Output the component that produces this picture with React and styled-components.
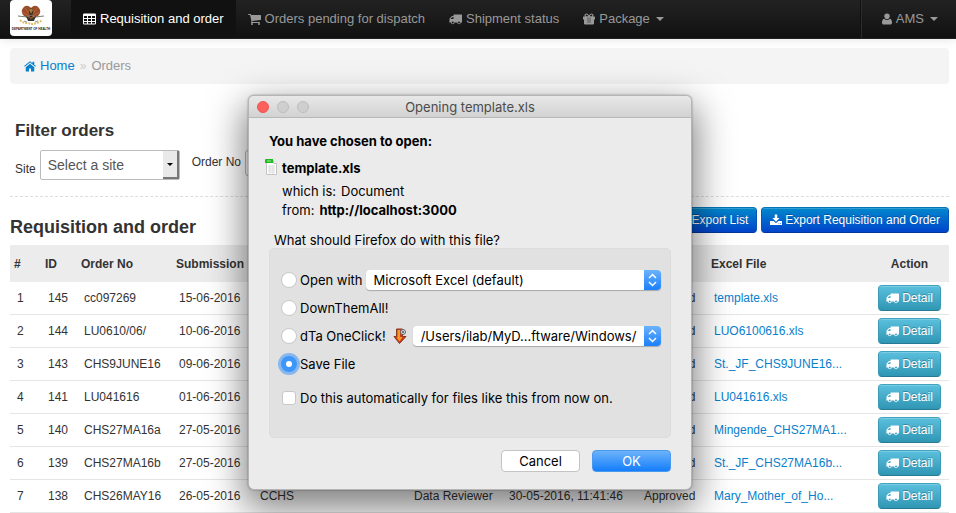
import React from "react";
import styled, { createGlobalStyle, css } from "styled-components";

const GlobalStyle = createGlobalStyle`
  *, *::before, *::after { box-sizing: border-box; }
  html, body { margin: 0; overflow: hidden; }
  body {
    background: #fff;
    color: #333;
    font-family: "Liberation Sans", Arial, sans-serif;
    font-size: 12px;
    line-height: 16px;
  }
  a { color: #0880cc; text-decoration: none; }
  button, select, input { font: inherit; margin: 0; }
`;

/* ---------- icons ---------- */

const Glyph = styled.svg`
  display: block;
  flex: none;
  fill: currentColor;
`;

const TableIcon = () => (
  <Glyph width="13" height="12" viewBox="0 0 13 12" aria-hidden="true">
    <path
      fillRule="evenodd"
      d="M1.2 0.5h10.6a1.2 1.2 0 0 1 1.2 1.2v8.6a1.2 1.2 0 0 1-1.2 1.2H1.2A1.2 1.2 0 0 1 0 10.300V1.700A1.200 1.200 0 0 1 1.200.5zM1 3v2h3V3zm4 0v2h3V3zm4 0v2h3V3zM1 6v2h3V6zm4 0v2h3V6zm4 0v2h3V6zM1 9v1.500h3V9zm4 0v1.500h3V9zm4 0v1.500h3V9z"
    />
  </Glyph>
);

const CartIcon = () => (
  <Glyph width="13" height="12" viewBox="0 0 1664 1536" aria-hidden="true">
    <path d="M640 1408a128 128 0 1 1-256 0 128 128 0 0 1 256 0zm896 0a128 128 0 1 1-256 0 128 128 0 0 1 256 0zm128-1088v512q0 24-16 42.500t-41 21.500L563 1018q13 60 13 70 0 16-24 64h920q26 0 45 19t19 45-19 45-45 19H448q-26 0-45-19t-19-45q0-11 8-31.500t16-36 21.500-40T445 1079L268 256H64q-26 0-45-19T0 192t19-45 45-19h256q16 0 28.500 6.500T368 150t13 24.500 8 26 5.500 29.500 4.500 26h1201q26 0 45 19t19 45z" />
  </Glyph>
);

const TruckIcon = () => (
  <Glyph width="13" height="12" viewBox="0 0 26 24" aria-hidden="true">
    <path
      fillRule="evenodd"
      d="M10 3h15a1 1 0 0 1 1 1v14a1 1 0 0 1-1 1h-1.500a3.500 3.500 0 0 1-7 0H11a3.500 3.500 0 0 1-7 0H1.500a1 1 0 0 1-.9-1.400L1 16.500V12q0-.8.6-1.400l3.800-3.900q.6-.7 1.400-.7H9V4a1 1 0 0 1 1-1zM3 12h6V8H7zm4.500 5a2 2 0 1 0 0 4 2 2 0 0 0 0-4zM20 17a2 2 0 1 0 0 4 2 2 0 0 0 0-4z"
    />
  </Glyph>
);

const GiftIcon = () => (
  <Glyph width="12" height="12" viewBox="0 0 24 24" aria-hidden="true">
    <path
      fillRule="evenodd"
      d="M7 1c2 0 3.600 1.600 5 4 1.400-2.400 3-4 5-4 2.200 0 4 1.700 4 3.800 0 .8-.2 1.600-.7 2.200H23a1 1 0 0 1 1 1v5h-2v8a2 2 0 0 1-2 2H4a2 2 0 0 1-2-2v-8H0V8a1 1 0 0 1 1-1h2.700A4 4 0 0 1 3 4.800C3 2.700 4.800 1 7 1zm0 2.200a1.700 1.700 0 1 0 0 3.400h3.600C9.500 4.500 8.400 3.200 7 3.200zm10 0c-1.400 0-2.500 1.300-3.600 3.400H17a1.700 1.700 0 1 0 0-3.400zM9.500 9v11h1V9zm4 0v11h1V9z"
    />
  </Glyph>
);

const UserIcon = () => (
  <Glyph width="10" height="12" viewBox="0 0 20 24" aria-hidden="true">
    <path d="M10 1a5.500 5.500 0 0 1 5.500 5.500c0 3-2.500 6-5.500 6s-5.500-3-5.500-6A5.500 5.500 0 0 1 10 1zM4.500 11.500C6 13 8 14 10 14s4-1 5.500-2.500c3 0 4.500 3.500 4.500 8 0 2.300-1.400 3.500-3.500 3.500h-13C1.400 23 0 21.800 0 19.500c0-4.500 1.500-8 4.500-8z" />
  </Glyph>
);

const HomeIcon = () => (
  <Glyph width="12" height="11" viewBox="0 0 24 22" aria-hidden="true">
    <path d="M12 5.500l8.500 7V20a1.200 1.200 0 0 1-1.200 1.200H14V15h-4v6.200H4.700A1.200 1.200 0 0 1 3.500 20v-7.500zM10.700 1.300a2 2 0 0 1 2.600 0L17 4.400V1.700h3.500v5.600l3.300 2.800-1.300 1.500L12 3.200 1.500 11.600.2 10.100z" />
  </Glyph>
);

const DownloadIcon = () => (
  <Glyph width="12" height="12" viewBox="0 0 24 24" aria-hidden="true">
    <path
      fillRule="evenodd"
      d="M9.500 1h5v7h4.700L12 15.300 4.800 8h4.700zM1 14h6.300l3 3q1.700 1.500 3.400 0l3-3H23a1 1 0 0 1 1 1v6a1 1 0 0 1-1 1H1a1 1 0 0 1-1-1v-6a1 1 0 0 1 1-1zm16 4.500v1.500h1.500v-1.500zm3.500 0V20H22v-1.500z"
    />
  </Glyph>
);

const CrestIcon = () => (
  <svg width="28" height="22" viewBox="0 0 28 22" aria-hidden="true">
    <path d="M6 3Q9-1 13 2l1 1 1-1q4-3 7 1 3 4-1 8l-5 3h-4L7 11Q3 7 6 3z" fill="#9b4d2a" />
    <path d="M8 3l5 7M20 3l-5 7M5 7l7 4M23 7l-7 4" stroke="#b3633a" strokeWidth="1" />
    <path d="M13 3h2l1 4-1 5h-2l-1-5z" fill="#33231b" />
    <path d="M12 5l2-2 2 2-2 4z" fill="#a07c3a" />
    <path d="M1 11l9 1 4-2 4 2 9-1" fill="none" stroke="#778075" strokeWidth="1" />
    <path d="M9 11l5 3 5-3-2 5h-6z" fill="#34372f" />
    <path d="M3 15q3 3 6 3t5 1q3 0 6-1t5-3" fill="none" stroke="#e2bf6c" strokeWidth="2" strokeDasharray="2 1" />
    <path d="M7 16l3 1M18 17l3-1" stroke="#8a97a0" strokeWidth="1" />
  </svg>
);

const FileIcon = () => (
  <svg width="13" height="17" viewBox="0 0 13 17" aria-hidden="true">
    <path d="M1.500 1.500h7l3 3v11h-10z" fill="#fff" stroke="#c4c4c4" />
    <path d="M3 7h7M3 9h7M3 11h7M3 13h7M5 6v9M8 6v9" stroke="#ddd" />
    <path d="M8.500 1.500v3h3" fill="#eee" stroke="#c5c5c5" />
    <path d="M0 1q0-1 1-1h7v4H0z" fill="#21b921" />
    <path d="M2 2h4" stroke="#a5eaa0" />
  </svg>
);

const ArrowIcon = () => (
  <svg width="14" height="16" viewBox="0 0 14 16" aria-hidden="true">
    <path d="M3.500 1h6v7.500H13l-6.500 7L1 8.500h2.500z" fill="#c93b18" stroke="#8c3425" />
    <path d="M4.500 2h2.500v7h2.500l-3 4.500L3.500 9.500h1z" fill="#f59a22" />
    <circle cx="10" cy="4" r="2.500" fill="#ddd" stroke="#666" />
    <circle cx="10" cy="4" r="1" fill="#555" />
  </svg>
);

const Caret = styled.span`
  border: 4px solid transparent;
  border-top-color: currentColor;
  border-bottom: 0;
  margin-left: 2px;
`;

/* ---------- navigation ---------- */

const Navbar = styled.nav`
  display: flex;
  height: 39px;
  padding-left: 10px;
  background: linear-gradient(#222, #111);
  border-bottom: 1px solid #252020;
  box-shadow: 0 1px 10px rgba(0, 0, 0, 0.1);
`;

const Brand = styled.a`
  display: flex;
  flex-direction: column;
  align-items: center;
  width: 42px;
  height: 36px;
  margin-right: 19px;
  padding-top: 5px;
  border-radius: 4px;
  background: #fff;
  color: #222;
  font-size: 3px;
  font-weight: bold;
  line-height: 4px;
  white-space: nowrap;
`;

const NavItem = styled.a`
  display: flex;
  align-items: center;
  gap: 4px;
  padding: 0 12px;
  font-size: 13px;
  color: ${(p) => (p.$active ? "#fff" : "#999")};
  white-space: nowrap;
  ${(p) => p.$active && css`background: #111;`}
  ${(p) =>
    p.$account &&
    css`
      margin-left: auto;
      padding: 0 18px 0 21px;
      border-left: 1px solid #111;
      box-shadow: inset 1px 0 #2c2c2c;
    `}
`;

/* ---------- page ---------- */

const Page = styled.main`
  padding: 9px 7px 0 10px;
`;

const Breadcrumb = styled.div`
  display: flex;
  align-items: center;
  gap: 5px;
  height: 36px;
  padding: 0 14px;
  border-radius: 4px;
  background: #f4f4f4;
  color: #999;
  font-size: 13px;

  a { display: flex; align-items: center; gap: 4px; }
  i { font-style: normal; color: #ccc; font-size: 12px; }
`;

const Title = styled.h3`
  margin: 0;
  font-size: 18px;
  line-height: 24px;
`;

const Filters = styled.section`
  padding: 35px 5px 16px;
  border-bottom: 1px dashed #ddd;

  ${Title} { font-size: 17px; }
`;

const FilterRow = styled.form`
  display: flex;
  align-items: center;
  height: 30px;
  margin-top: 7px;
`;

const FilterLabel = styled.label`
  color: #333;
  margin-right: 4px;
  ${(p) => (p.$raised ? css`margin-left: 12px; padding-bottom: 7px;` : css`padding-top: 8px;`)}
`;

const SiteBox = styled.div`
  display: grid;
  grid-template-columns: 1fr 16px;
  width: 140px;
  height: 30px;
  border: 1px solid #bbb;
  border-radius: 2px;
  background: #fff;

  select {
    grid-area: 1 / 1 / 2 / 3;
    appearance: none;
    border: 0;
    padding: 0 7px;
    background: none;
    color: #555;
    font-size: 14px;
  }
`;

const SiteArrow = styled.span`
  grid-area: 1 / 2 / 2 / 3;
  display: grid;
  place-items: center;
  background: #e9e9e9;
  border-right: 2px solid #777;
  border-bottom: 2px solid #777;
  color: #000;
  pointer-events: none;

  ${Caret} { margin: 0; border-width: 3px 3px 0; }
`;

const OrderInput = styled.input`
  width: 130px;
  height: 26px;
  margin-bottom: 4px;
  border: 1px solid #bbb;
  border-radius: 3px;
`;

const ListHeader = styled.div`
  display: flex;
  align-items: center;
  justify-content: space-between;
  height: 48px;

  ${Title} { padding-top: 12px; }
`;

const Actions = styled.div`
  display: flex;
  gap: 4px;
  padding-bottom: 2px;
`;

const Button = styled.button`
  display: inline-flex;
  align-items: center;
  justify-content: center;
  gap: 3px;
  height: 26px;
  padding: 0 ${(p) => (p.$info ? "7px" : "8px")};
  border: 1px solid;
  border-radius: 4px;
  color: #fff;
  white-space: nowrap;
  text-shadow: 0 -1px 0 rgba(0, 0, 0, 0.25);
  box-shadow: inset 0 1px 0 rgba(255, 255, 255, 0.2);
  ${(p) =>
    p.$info
      ? css`
          background: linear-gradient(#5bc0de, #2f96b4);
          border-color: #3ea4bf #3a9ab5 #267a93;
        `
      : css`
          background: linear-gradient(#0088cc, #0044cc);
          border-color: #0574b5 #0656b6 #003696;
        `}
`;

const Table = styled.table`
  width: 100%;
  table-layout: fixed;
  border-collapse: separate;
  border-spacing: 0;

  th {
    height: 37px;
    padding: 0 4px;
    background: #ececec;
    text-align: left;
    white-space: nowrap;
  }
  td {
    height: 33px;
    padding: 0 0 0 7px;
    border-bottom: 1px solid #e5e5e5;
    white-space: nowrap;
  }
  th:last-child, td:last-child { padding: 0; text-align: center; }
  ${Button} { vertical-align: middle; }
`;

const Col = styled.col`
  width: ${(p) => p.$w};
`;

/* ---------- dialog ---------- */

const Dialog = styled.section`
  position: absolute;
  top: 95px;
  left: 50%;
  width: 444px;
  margin-left: -230px;
  border: 1px solid #b5b5b5;
  border-radius: 6px;
  background: #ebebeb;
  color: #000;
  font-family: Inter, "Open Sans", sans-serif;
  font-size: 13px;
  box-shadow: 0 0 2px rgba(0, 0, 0, 0.4), 0 14px 36px 4px rgba(0, 0, 0, 0.5);
`;

const TitleBar = styled.header`
  display: grid;
  grid-template-columns: 60px 1fr 60px;
  align-items: center;
  height: 22px;
  padding: 0 8px;
  border-bottom: 1px solid #b8b8b8;
  border-radius: 5px 5px 0 0;
  background: linear-gradient(#e8e8e8, #d2d2d2);
  color: #4c4c4c;
  text-align: center;
`;

const Lights = styled.div`
  display: flex;
  gap: 8px;
`;

const Light = styled.button`
  width: 12px;
  height: 12px;
  padding: 0;
  border-radius: 50%;
  border: 1px solid ${(p) => (p.$close ? "#ee5550" : "#bdbdbd")};
  background: ${(p) => (p.$close ? "#fc605c" : "#cfcfcf")};
`;

const DialogBody = styled.div`
  padding: 15px 20px 17px;
`;

const Lead = styled.p`
  margin: 0;
  font-weight: bold;
`;

const FileInfo = styled.div`
  display: grid;
  grid-template-columns: 13px 1fr;
  column-gap: 4px;
  margin: 10px 0 0 -4px;
`;

const FileName = styled.strong`
  align-self: center;
`;

const FileMeta = styled.div`
  grid-column: 2;
  display: flex;
  gap: 5px;
  margin-top: ${(p) => (p.$first ? "7px" : "3px")};
`;

const Question = styled.p`
  margin: 14px 0 0 5px;
`;

const Options = styled.div`
  display: flex;
  flex-direction: column;
  height: 190px;
  padding: 17px 9px 0 11px;
  border: 1px solid #dcdcdc;
  border-radius: 5px;
  background: #e1e1e1;
`;

const Option = styled.div`
  display: flex;
  align-items: center;
  height: 28px;
  ${(p) => p.$last && css`margin-top: 6px;`}

  svg { flex: none; }
`;

const OptionLabel = styled.label`
  display: flex;
  align-items: center;
  gap: 3px;
  white-space: nowrap;
  margin-right: ${(p) => (p.$wide ? "7px" : "3px")};
`;

const Radio = styled.input.attrs({ type: "radio", name: "action" })`
  appearance: none;
  width: 16px;
  height: 16px;
  border: 1px solid #c8c8c8;
  border-radius: 50%;
  background: #fff;

  &:checked {
    border: 5px solid #3e97f8;
    box-shadow: 0 0 0 3px #87b7ed;
  }
`;

const Checkbox = styled.input.attrs({ type: "checkbox" })`
  appearance: none;
  width: 14px;
  height: 14px;
  margin: 0 1px;
  border: 1px solid #c8c8c8;
  border-radius: 3px;
  background: #fff;
`;

const Picker = styled.div`
  flex: 1;
  display: grid;
  grid-template-columns: 1fr 17px;
  height: 20px;
  margin-left: ${(p) => (p.$spaced ? "6px" : "0")};
  border-radius: 4px;
  background: #fff;
  box-shadow: 0 1px 1px rgba(0, 0, 0, 0.25);
  overflow: hidden;

  select {
    grid-area: 1 / 1 / 2 / 3;
    min-width: 0;
    appearance: none;
    border: 0;
    padding: 0 20px 0 8px;
    background: none;
    color: #000;
  }
`;

const Stepper = styled.span`
  grid-area: 1 / 2 / 2 / 3;
  display: grid;
  place-items: center;
  background: linear-gradient(#6bb2fa, #1a80fb);
  pointer-events: none;
`;

const StepperArrows = () => (
  <Stepper>
    <svg width="9" height="14" viewBox="0 0 9 14" aria-hidden="true">
      <path d="M1 5l3.500-3.500L8 5M1 9l3.500 3.500L8 9" fill="none" stroke="#fff" strokeWidth="1.500" />
    </svg>
  </Stepper>
);

const Footer = styled.footer`
  display: flex;
  justify-content: flex-end;
  gap: 12px;
  margin-top: 12px;
`;

const DialogButton = styled.button`
  width: 79px;
  height: 22px;
  padding: 0;
  border: 1px solid ${(p) => (p.$primary ? "#4b98f0" : "#c4c4c4")};
  border-radius: 4px;
  background: ${(p) => (p.$primary ? "linear-gradient(#6cb3fa, #147efb)" : "#fff")};
  color: ${(p) => (p.$primary ? "#fff" : "#000")};
`;

const columns = ["31px", "36px", "95px", "81px", "154px", "95px", "135px", "70px", "auto", "79px"];
const headers = ["#", "ID", "Order No", "Submission", "", "", "", "", "Excel File", "Action"];

const orders = [
  { id: 145, no: "cc097269", date: "15-06-2016", file: "template.xls" },
  { id: 144, no: "LU0610/06/", date: "10-06-2016", file: "LUO6100616.xls" },
  { id: 143, no: "CHS9JUNE16", date: "09-06-2016", file: "St._JF_CHS9JUNE16..." },
  { id: 141, no: "LU041616", date: "01-06-2016", file: "LU041616.xls" },
  { id: 140, no: "CHS27MA16a", date: "27-05-2016", file: "Mingende_CHS27MA1..." },
  { id: 139, no: "CHS27MA16b", date: "27-05-2016", file: "St._JF_CHS27MA16b..." },
  {
    id: 138,
    no: "CHS26MAY16",
    date: "26-05-2016",
    site: "CCHS",
    by: "Data Reviewer",
    reviewed: "30-05-2016, 11:41:46",
    file: "Mary_Mother_of_Ho...",
  },
];

function OrdersTable() {
  return (
    <Table>
      <colgroup>
        {columns.map((w, i) => (
          <Col key={i} $w={w} />
        ))}
      </colgroup>
      <thead>
        <tr>
          {headers.map((h, i) => (
            <th key={i} scope="col">{h}</th>
          ))}
        </tr>
      </thead>
      <tbody>
        {orders.map((o, i) => (
          <tr key={o.id}>
            <td>{i + 1}</td>
            <td>{o.id}</td>
            <td>{o.no}</td>
            <td>{o.date}</td>
            <td>{o.site}</td>
            <td>{o.by}</td>
            <td>{o.reviewed}</td>
            <td>Approved</td>
            <td><a href="#file">{o.file}</a></td>
            <td>
              <Button type="button" $info><TruckIcon />Detail</Button>
            </td>
          </tr>
        ))}
      </tbody>
    </Table>
  );
}

function DownloadDialog() {
  return (
    <Dialog role="dialog" aria-labelledby="dialog-title">
      <TitleBar>
        <Lights>
          <Light type="button" aria-label="Close" $close />
          <Light type="button" aria-label="Minimize" disabled />
          <Light type="button" aria-label="Zoom" disabled />
        </Lights>
        <span id="dialog-title">Opening template.xls</span>
      </TitleBar>
      <DialogBody>
        <Lead>You have chosen to open:</Lead>
        <FileInfo>
          <FileIcon />
          <FileName>template.xls</FileName>
          <FileMeta $first><span>which is:</span><span>Document</span></FileMeta>
          <FileMeta><span>from:</span><strong>http://localhost:3000</strong></FileMeta>
        </FileInfo>
        <Question>What should Firefox do with this file?</Question>
        <Options>
          <Option>
            <OptionLabel><Radio />Open with</OptionLabel>
            <Picker>
              <select aria-label="Application"><option>Microsoft Excel (default)</option></select>
              <StepperArrows />
            </Picker>
          </Option>
          <Option>
            <OptionLabel><Radio />DownThemAll!</OptionLabel>
          </Option>
          <Option>
            <OptionLabel $wide><Radio />dTa OneClick!</OptionLabel>
            <ArrowIcon />
            <Picker $spaced>
              <select aria-label="Folder"><option>/Users/ilab/MyD...ftware/Windows/</option></select>
              <StepperArrows />
            </Picker>
          </Option>
          <Option>
            <OptionLabel><Radio defaultChecked />Save File</OptionLabel>
          </Option>
          <Option $last>
            <OptionLabel><Checkbox />Do this automatically for files like this from now on.</OptionLabel>
          </Option>
        </Options>
        <Footer>
          <DialogButton type="button">Cancel</DialogButton>
          <DialogButton type="button" $primary>OK</DialogButton>
        </Footer>
      </DialogBody>
    </Dialog>
  );
}

export default function App() {
  return (
    <>
      <GlobalStyle />
      <Navbar>
        <Brand href="#top"><CrestIcon />DEPARTMENT OF HEALTH</Brand>
        <NavItem href="#orders" $active><TableIcon />Requisition and order</NavItem>
        <NavItem href="#pending"><CartIcon />Orders pending for dispatch</NavItem>
        <NavItem href="#shipment"><TruckIcon />Shipment status</NavItem>
        <NavItem href="#package"><GiftIcon />Package<Caret /></NavItem>
        <NavItem href="#account" $account><UserIcon />AMS<Caret /></NavItem>
      </Navbar>
      <Page>
        <Breadcrumb>
          <a href="#home"><HomeIcon />Home</a>
          <i>»</i>
          <span>Orders</span>
        </Breadcrumb>
        <Filters>
          <Title>Filter orders</Title>
          <FilterRow>
            <FilterLabel htmlFor="site">Site</FilterLabel>
            <SiteBox>
              <select id="site"><option>Select a site</option></select>
              <SiteArrow><Caret /></SiteArrow>
            </SiteBox>
            <FilterLabel htmlFor="order-no" $raised>Order No</FilterLabel>
            <OrderInput id="order-no" type="text" />
          </FilterRow>
        </Filters>
        <ListHeader>
          <Title>Requisition and order</Title>
          <Actions>
            <Button type="button"><DownloadIcon />Export List</Button>
            <Button type="button"><DownloadIcon />Export Requisition and Order</Button>
          </Actions>
        </ListHeader>
        <OrdersTable />
      </Page>
      <DownloadDialog />
    </>
  );
}
